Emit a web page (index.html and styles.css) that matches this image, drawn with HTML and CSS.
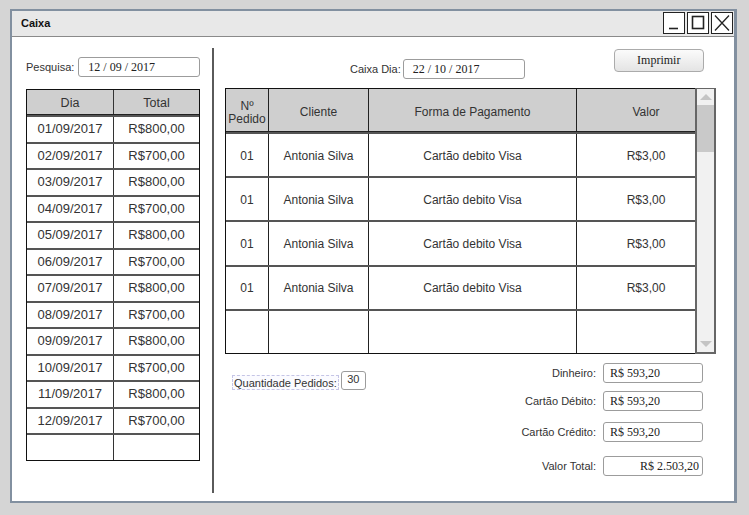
FILE: index.html
```html
<!DOCTYPE html>
<html lang="pt">
<head>
<meta charset="utf-8">
<title>Caixa</title>
<link rel="stylesheet" href="styles.css">
</head>
<body>
<div class="window">
  <div class="titlebar">
    <span class="title">Caixa</span>
    <div class="winbtns">
      <span class="winbtn"><svg width="20" height="20" viewBox="0 0 20 20"><path d="M5 15.5 H14" stroke="#222" stroke-width="1.6" fill="none"/></svg></span>
      <span class="winbtn"><svg width="20" height="20" viewBox="0 0 20 20"><rect x="4.5" y="3.5" width="11" height="12" stroke="#222" stroke-width="1.6" fill="none"/></svg></span>
      <span class="winbtn"><svg width="20" height="20" viewBox="0 0 20 20"><path d="M3 2.5 L17 17.5 M17 2.5 L3 17.5" stroke="#222" stroke-width="1.3" fill="none"/></svg></span>
    </div>
  </div>
  <div class="body">
    <div class="left">
      <div class="field-row pesquisa">
        <span class="lbl">Pesquisa:</span>
        <span class="input w122">12 / 09 / 2017</span>
      </div>
      <div class="ltable">
        <div class="lrow lhead"><span>Dia</span><span>Total</span></div>
        <div class="lrow"><span>01/09/2017</span><span>R$800,00</span></div>
        <div class="lrow"><span>02/09/2017</span><span>R$700,00</span></div>
        <div class="lrow"><span>03/09/2017</span><span>R$800,00</span></div>
        <div class="lrow"><span>04/09/2017</span><span>R$700,00</span></div>
        <div class="lrow"><span>05/09/2017</span><span>R$800,00</span></div>
        <div class="lrow"><span>06/09/2017</span><span>R$700,00</span></div>
        <div class="lrow"><span>07/09/2017</span><span>R$800,00</span></div>
        <div class="lrow"><span>08/09/2017</span><span>R$700,00</span></div>
        <div class="lrow"><span>09/09/2017</span><span>R$800,00</span></div>
        <div class="lrow"><span>10/09/2017</span><span>R$700,00</span></div>
        <div class="lrow"><span>11/09/2017</span><span>R$800,00</span></div>
        <div class="lrow"><span>12/09/2017</span><span>R$700,00</span></div>
        <div class="lrow"><span></span><span></span></div>
      </div>
    </div>
    <div class="sep"></div>
    <div class="right">
      <div class="toprow">
        <div class="field-row caixadia">
          <span class="lbl">Caixa Dia:</span>
          <span class="input w122">22 / 10 / 2017</span>
        </div>
        <span class="btn">Imprimir</span>
      </div>
      <div class="rtable-wrap">
        <div class="rtable">
          <div class="rrow rhead">
            <span class="c1 two">Nº<br>Pedido</span><span>Cliente</span><span>Forma de Pagamento</span><span>Valor</span>
          </div>
          <div class="rrow"><span class="c1">01</span><span>Antonia Silva</span><span>Cartão debito Visa</span><span>R$3,00</span></div>
          <div class="rrow"><span class="c1">01</span><span>Antonia Silva</span><span>Cartão debito Visa</span><span>R$3,00</span></div>
          <div class="rrow"><span class="c1">01</span><span>Antonia Silva</span><span>Cartão debito Visa</span><span>R$3,00</span></div>
          <div class="rrow"><span class="c1">01</span><span>Antonia Silva</span><span>Cartão debito Visa</span><span>R$3,00</span></div>
          <div class="rrow"><span class="c1"></span><span></span><span></span><span></span></div>
        </div>
        <div class="scrollbar">
          <div class="sb-up"><svg width="14" height="8" viewBox="0 0 14 8"><path d="M1 7 L7 1 L13 7 Z" fill="#c4c4c4"/></svg></div>
          <div class="sb-thumb"></div>
          <div class="sb-track"></div>
          <div class="sb-down"><svg width="14" height="8" viewBox="0 0 14 8"><path d="M1 1 L7 7 L13 1 Z" fill="#c4c4c4"/></svg></div>
        </div>
      </div>
      <div class="bottom">
        <div class="qtd">
          <span class="lbl dashed">Quantidade Pedidos:</span>
          <span class="input small">30</span>
        </div>
        <div class="totals">
          <div class="field-row t1"><span class="lbl">Dinheiro:</span><span class="input w100">R$ 593,20</span></div>
          <div class="field-row t2"><span class="lbl">Cartão Débito:</span><span class="input w100">R$ 593,20</span></div>
          <div class="field-row t3"><span class="lbl">Cartão Crédito:</span><span class="input w100">R$ 593,20</span></div>
          <div class="field-row t4"><span class="lbl">Valor Total:</span><span class="input w100 ralign">R$ 2.503,20</span></div>
        </div>
      </div>
    </div>
  </div>
</div>
</body>
</html>
```

FILE: styles.css
```css
* { box-sizing: border-box; }

html, body {
  margin: 0;
  padding: 0;
  background: #d5d5d5;
  width: 749px;
  height: 515px;
  overflow: hidden;
  font-family: "Liberation Sans", Arial, sans-serif;
  color: #333;
}

.window {
  margin: 9px 0 0 10px;
  width: 727px;
  height: 494px;
  border: 2px solid #8290a0;
  border-right-width: 3px;
  background: #fff;
  display: flex;
  flex-direction: column;
}

.titlebar {
  height: 26px;
  flex: none;
  background: #e8e8e8;
  border-bottom: 1px solid #8a8a8a;
  display: flex;
  align-items: flex-start;
  justify-content: space-between;
  padding: 0 1px 0 9px;
}

.title {
  font-weight: bold;
  font-size: 11px;
  color: #111;
  line-height: 25px;
}

.winbtns {
  display: flex;
  gap: 2px;
  margin-top: 1px;
}

.winbtn {
  width: 22px;
  height: 22px;
  border: 1px solid #222;
  background: #fff;
  display: block;
}
.winbtn svg { display: block; }

.body {
  flex: 1;
  display: flex;
  align-items: flex-start;
}

.left {
  width: 200px;
  padding-left: 14px;
  flex: none;
}

.field-row {
  display: flex;
  align-items: center;
}

.lbl {
  font-size: 11px;
  color: #333;
  white-space: nowrap;
}

.input {
  display: block;
  height: 20px;
  border: 1px solid #9c9c9c;
  border-radius: 3px;
  background: #fff;
  font-family: "Liberation Serif", "Times New Roman", serif;
  font-size: 12px;
  color: #222;
  line-height: 18px;
  padding-left: 9px;
  white-space: nowrap;
}
.w122 { width: 122px; }
.w100 { width: 100px; padding-left: 6px; }
.ralign { text-align: right; padding-right: 3px; }

.pesquisa { margin-top: 20px; gap: 4px; }

.ltable {
  margin-top: 12px;
  width: 174px;
  border: 1px solid #111;
  border-bottom-width: 1.5px;
}

.lrow {
  display: grid;
  grid-template-columns: 87px 1fr;
  height: 26.5px;
  border-top: 2px solid #555;
  font-size: 13px;
  color: #333;
}
.lrow > span {
  display: flex;
  align-items: center;
  justify-content: center;
  padding-bottom: 1px;
}
.lrow > span:first-child { border-right: 1.5px solid #333; }
.lhead {
  height: 25px;
  border-top: none;
  background: #cfcfcf;
  font-size: 12.5px;
  border-bottom: 1px solid #222;
}
.lhead > span { padding-bottom: 0; padding-top: 2px; }

.sep {
  flex: none;
  width: 2px;
  height: 445px;
  margin-top: 11px;
  background: #5a5a5a;
}

.right {
  flex: 1;
  padding-left: 11px;
}

.toprow {
  height: 51px;
  display: flex;
  align-items: flex-start;
}

.caixadia {
  margin-top: 22px;
  margin-left: 125px;
  gap: 2px;
}

.btn {
  margin-top: 12px;
  margin-left: 89px;
  width: 90px;
  height: 23px;
  border: 1px solid #ababab;
  border-radius: 4px;
  background: linear-gradient(#fbfbfb, #e4e4e4);
  font-family: "Liberation Serif", "Times New Roman", serif;
  font-size: 12px;
  color: #222;
  display: flex;
  align-items: center;
  justify-content: center;
}

.rtable-wrap {
  position: relative;
  width: 491px;
  height: 266px;
}

.rtable {
  width: 491px;
  height: 266px;
  border: 1px solid #111;
  display: flex;
  flex-direction: column;
}

.rrow {
  display: grid;
  grid-template-columns: 43px 100px 208px 1fr;
  flex: 1;
  border-top: 2px solid #555;
  font-size: 12px;
  color: #333;
}
.rrow > span {
  display: flex;
  align-items: center;
  justify-content: center;
  border-right: 1.5px solid #222;
  text-align: center;
  padding-top: 1px;
}
.rrow > span:last-child { border-right: none; }
.rhead {
  border-top: none;
  background: #cfcfcf;
  flex: none;
  height: 43px;
  border-bottom: 1px solid #222;
}
.rhead > span { padding-top: 3px; }
.two { line-height: 13px; padding-top: 5px !important; }

.scrollbar {
  position: absolute;
  right: 0;
  top: 0;
  width: 21px;
  height: 266px;
  border: 2px solid #666;
  border-top-width: 1px;
  background: #f1f1f1;
  display: flex;
  flex-direction: column;
}
.sb-up, .sb-down {
  height: 16px;
  flex: none;
  display: flex;
  align-items: center;
  justify-content: center;
}
.sb-thumb {
  height: 47px;
  flex: none;
  background: #c9c9c9;
}
.sb-track { flex: 1; }

.bottom {
  display: flex;
  align-items: flex-start;
}

.qtd {
  margin-top: 17px;
  margin-left: 7px;
  display: flex;
  align-items: center;
  gap: 2px;
}
.dashed {
  border: 1px dashed #c5c5e6;
  background: #fbfbff;
  padding: 1px 1px 0 1px;
  margin-top: 4px;
}
.input.small {
  width: 25px;
  height: 19px;
  padding: 0;
  text-align: center;
  font-family: "Liberation Sans", Arial, sans-serif;
  font-size: 11px;
  line-height: 15px;
  color: #333;
}

.totals {
  margin-left: auto;
  margin-right: 31px;
  display: flex;
  flex-direction: column;
  align-items: flex-end;
}
.totals .field-row { gap: 7px; }
.t1 { margin-top: 9px; }
.t2 { margin-top: 8px; }
.t3 { margin-top: 11px; }
.t4 { margin-top: 14px; }
```
